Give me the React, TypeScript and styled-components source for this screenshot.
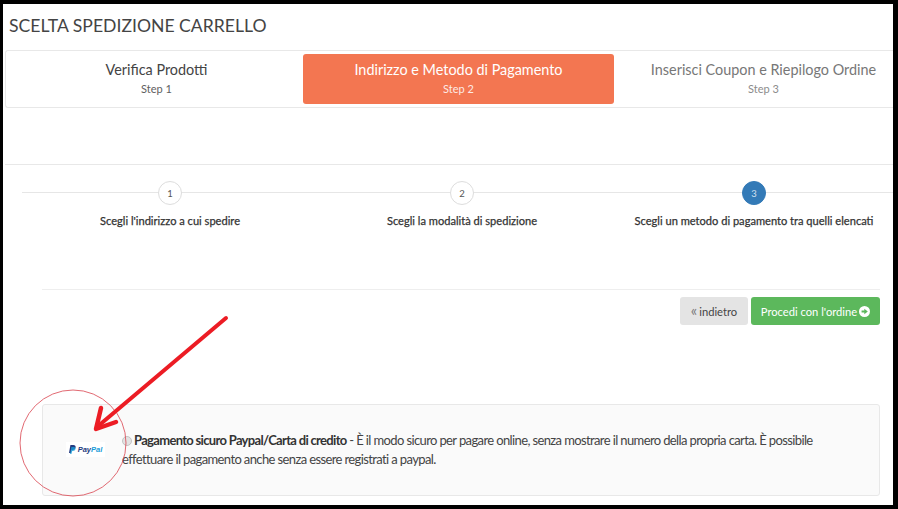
import styled, { createGlobalStyle } from "styled-components";

const GlobalStyle = createGlobalStyle`
  html, body {
    margin: 0;
    padding: 0;
    background: #fff;
  }
  * {
    box-sizing: border-box;
  }
`;

const Frame = styled.div`
  position: relative;
  width: 898px;
  height: 509px;
  overflow: hidden;
  background: #fff;
  border-style: solid;
  border-color: #000;
  border-width: 4px 5px 4px 3px;
  padding-left: 2px;
  font-family: Lato, "Open Sans", sans-serif;
  color: #444;
`;

const Title = styled.h1`
  margin: 0;
  height: 46px;
  padding: 12px 0 0 4px;
  font-size: 17.6px;
  line-height: 20px;
  font-weight: 400;
  color: #444;
`;

const TabBar = styled.div`
  display: grid;
  grid-template-columns: 297px 311px 1fr;
  height: 58px;
  padding: 3px 0;
  border: 1px solid #e8e8e8;
  border-right: none;
  border-radius: 3px 0 0 3px;
`;

const Tab = styled.div<{ $active?: boolean; $muted?: boolean; $shift?: number }>`
  display: flex;
  flex-direction: column;
  align-items: center;
  padding-top: 7px;
  padding-left: ${(p) => p.$shift ?? 0}px;
  height: 50px;
  border-radius: 3px;
  background: ${(p) => (p.$active ? "#f37651" : "transparent")};
  color: ${(p) => (p.$active ? "#fff" : p.$muted ? "#777" : "#444")};
`;

const TabTitle = styled.div`
  font-size: 14.4px;
  line-height: 18px;
  white-space: nowrap;
`;

const TabStep = styled.div`
  font-size: 11px;
  line-height: 15px;
  margin-top: 2px;
  opacity: 0.85;
`;

const Wizard = styled.section`
  margin-top: 56px;
  border-top: 1px solid #e8e8e8;
  height: 125px;
  padding: 16px 0 0 17px;
`;

const StepRow = styled.div`
  position: relative;
  display: grid;
  grid-template-columns: repeat(3, 292px);
  margin-left: 2px;
  &::before {
    content: "";
    position: absolute;
    left: -2px;
    right: -20px;
    top: 11px;
    height: 1px;
    background: #e6e6e6;
  }
`;

const Step = styled.div`
  position: relative;
  display: flex;
  flex-direction: column;
  align-items: center;
`;

const StepDot = styled.div<{ $active?: boolean }>`
  width: 24px;
  height: 24px;
  border-radius: 50%;
  display: flex;
  align-items: center;
  justify-content: center;
  font-size: 9.5px;
  background: ${(p) => (p.$active ? "#337ab7" : "#fff")};
  border: 1px solid ${(p) => (p.$active ? "#337ab7" : "#ddd")};
  color: ${(p) => (p.$active ? "#cfe0ef" : "#555")};
`;

const StepLabel = styled.div`
  margin-top: 8px;
  font-size: 11.1px;
  line-height: 15px;
  color: #333;
  white-space: nowrap;
  -webkit-text-stroke: 0.25px #333;
`;

const Actions = styled.div`
  margin: 0 13px 0 37px;
  border-top: 1px solid #eee;
  padding-top: 7px;
  display: flex;
  justify-content: flex-end;
  gap: 3px;
`;

const Button = styled.button<{ $primary?: boolean }>`
  height: 28px;
  padding: 0;
  border: none;
  border-radius: 3px;
  display: flex;
  align-items: center;
  justify-content: center;
  gap: 2px;
  font-family: inherit;
  font-size: 11.2px;
  width: ${(p) => (p.$primary ? "129px" : "68px")};
  background: ${(p) => (p.$primary ? "#5cb85c" : "#e4e4e4")};
  color: ${(p) => (p.$primary ? "#fff" : "#444")};
`;

const BackMark = styled.span`
  font-size: 15px;
  line-height: 14px;
  margin-top: -2px;
  color: #777;
`;

const PaymentPanel = styled.div`
  margin: 79px 13px 0 37px;
  height: 92px;
  display: flex;
  align-items: center;
  background: #fafafa;
  border: 1px solid #e8e8e8;
  border-radius: 3px;
`;

const LogoBox = styled.div`
  width: 79px;
  flex: none;
  display: flex;
  justify-content: center;
  padding: 0 0 2px 6px;
`;

const Logo = styled.div`
  display: flex;
  align-items: center;
  gap: 2px;
  padding: 3px 3px;
  background: #fff;
`;

const LogoWord = styled.span`
  font-family: "Liberation Sans", sans-serif;
  font-size: 7.5px;
  font-weight: 700;
  font-style: italic;
  color: #253b80;
`;

const LogoWordLight = styled.span`
  color: #179bd7;
`;

const PaymentText = styled.div`
  width: 720px;
  font-size: 13px;
  line-height: 19px;
  letter-spacing: -0.62px;
  color: #444;
  white-space: nowrap;
`;

const PaymentLine = styled.div`
  display: flex;
  align-items: center;
  white-space: pre;
`;

const Radio = styled.span`
  flex: none;
  width: 10px;
  height: 10px;
  margin-right: 2px;
  border-radius: 50%;
  border: 1px solid #c4c4c4;
  background: #e3e3e3;
`;

const Strong = styled.strong`
  font-weight: 700;
  color: #333;
  letter-spacing: -0.68px;
`;

const Annotation = styled.svg`
  position: absolute;
  left: -3px;
  top: -4px;
  width: 898px;
  height: 509px;
  pointer-events: none;
`;

const steps = [
  { n: 1, label: "Scegli l'indirizzo a cui spedire" },
  { n: 2, label: "Scegli la modalità di spedizione" },
  { n: 3, label: "Scegli un metodo di pagamento tra quelli elencati", active: true },
];

const App = () => {
  return (
    <>
      <GlobalStyle />
      <Frame>
        <Title>SCELTA SPEDIZIONE CARRELLO</Title>
        <TabBar>
          <Tab $shift={4}>
            <TabTitle>Verifica Prodotti</TabTitle>
            <TabStep>Step 1</TabStep>
          </Tab>
          <Tab $active>
            <TabTitle>Indirizzo e Metodo di Pagamento</TabTitle>
            <TabStep>Step 2</TabStep>
          </Tab>
          <Tab $muted $shift={20}>
            <TabTitle>Inserisci Coupon e Riepilogo Ordine</TabTitle>
            <TabStep>Step 3</TabStep>
          </Tab>
        </TabBar>
        <Wizard>
          <StepRow>
            {steps.map((s) => (
              <Step key={s.n}>
                <StepDot $active={s.active}>{s.n}</StepDot>
                <StepLabel>{s.label}</StepLabel>
              </Step>
            ))}
          </StepRow>
        </Wizard>
        <Actions>
          <Button>
            <BackMark>«</BackMark> indietro
          </Button>
          <Button $primary>
            Procedi con l'ordine
            <svg width="11" height="11" viewBox="0 0 12 12">
              <circle cx="6" cy="6" r="6" fill="#fff" />
              <path d="M2.8 5h3V2.9L9.6 6 5.8 9.1V7h-3z" fill="#5cb85c" />
            </svg>
          </Button>
        </Actions>
        <PaymentPanel>
          <LogoBox>
            <Logo>
              <svg width="7" height="9" viewBox="0 0 7 9">
                <path d="M1.4 0h3C6 0 7 1 6.6 2.6 6.2 4.2 5 5 3.4 5H2.4L1.9 8H0z" fill="#253b80" />
                <path d="M2.4 2h2.4c1.4 0 2 .8 1.7 2-.3 1.3-1.3 2-2.6 2h-.7L2.4 9H1z" fill="#179bd7" opacity="0.8" />
              </svg>
              <LogoWord>
                Pay<LogoWordLight>Pal</LogoWordLight>
              </LogoWord>
            </Logo>
          </LogoBox>
          <PaymentText>
            <PaymentLine>
              <Radio />
              <Strong>Pagamento sicuro Paypal/Carta di credito</Strong>
              <span> - È il modo sicuro per pagare online, senza mostrare il numero della propria carta. È possibile</span>
            </PaymentLine>
            <PaymentLine>effettuare il pagamento anche senza essere registrati a paypal.</PaymentLine>
          </PaymentText>
        </PaymentPanel>
        <Annotation viewBox="0 0 898 509">
          <circle cx="73" cy="443" r="53" fill="none" stroke="#d9434e" strokeWidth="0.8" />
          <path d="M226 318L97 427" fill="none" stroke="#ec1c24" strokeWidth="4" strokeLinecap="round" />
          <path
            d="M101 408L96 429L116 422"
            fill="none"
            stroke="#ec1c24"
            strokeWidth="4.5"
            strokeLinecap="round"
            strokeLinejoin="round"
          />
        </Annotation>
      </Frame>
    </>
  );
};

export default App;
